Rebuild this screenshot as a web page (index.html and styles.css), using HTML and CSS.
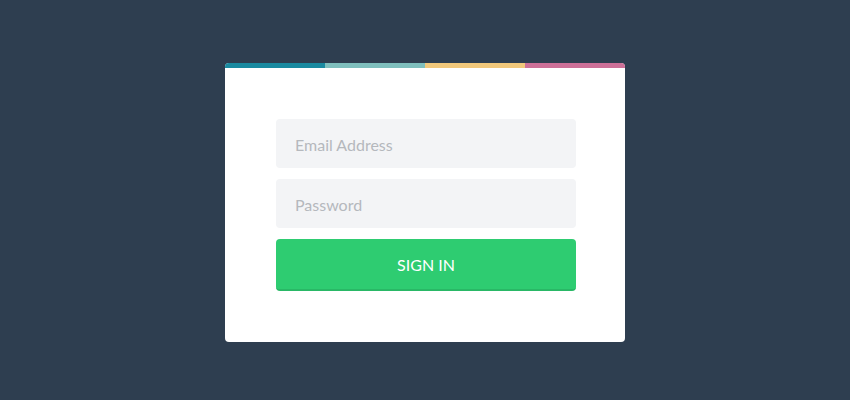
FILE: index.html
```html
<!DOCTYPE html>
<html lang="en">
<head>
  <meta charset="UTF-8">
  <title>Sign In</title>
  <link rel="stylesheet" href="styles.css">
</head>
<body>

<div class="page">
  <form class="login">
    <div class="stripe">
      <span class="c1"></span>
      <span class="c2"></span>
      <span class="c3"></span>
      <span class="c4"></span>
    </div>
    <div class="fields">
      <input type="text" class="field" placeholder="Email Address">
      <input type="password" class="field" placeholder="Password">
      <button type="button" class="btn">SIGN IN</button>
    </div>
  </form>
</div>

</body>
</html>
```

FILE: styles.css
```css
* {
  margin: 0;
  padding: 0;
  box-sizing: border-box;
}
body {
  background-color: #2e3e50;
  font-family: Lato, "Open Sans", sans-serif;
}
.page {
  height: 400px;
  padding-top: 63px;
  display: flex;
  justify-content: center;
  align-items: flex-start;
}
.login {
  width: 400px;
  background-color: #fff;
  border-radius: 4px;
  overflow: hidden;
}
.stripe {
  display: flex;
  height: 5px;
}
.stripe span {
  flex: 1;
}
.stripe .c1 { background-color: #1a8aa0; }
.stripe .c2 { background-color: #7fbfbd; }
.stripe .c3 { background-color: #f1c87b; }
.stripe .c4 { background-color: #cd7098; }

.fields {
  padding: 51px 49px 51px 51px;
  display: flex;
  flex-direction: column;
  gap: 11px;
}
.field {
  height: 49px;
  border: none;
  border-radius: 4px;
  background-color: #f3f4f6;
  padding: 2px 0 0 19px;
  font-family: inherit;
  font-size: 16px;
  color: #555;
  outline: none;
}
.field::placeholder {
  color: #b5b8bd;
}
.btn {
  height: 52px;
  border: none;
  border-bottom: 2px solid #29b866;
  border-radius: 4px;
  background-color: #2ecc71;
  color: #fff;
  font-family: inherit;
  font-size: 16px;
  cursor: pointer;
}
.btn:hover {
  background-color: #29c06a;
}
```
